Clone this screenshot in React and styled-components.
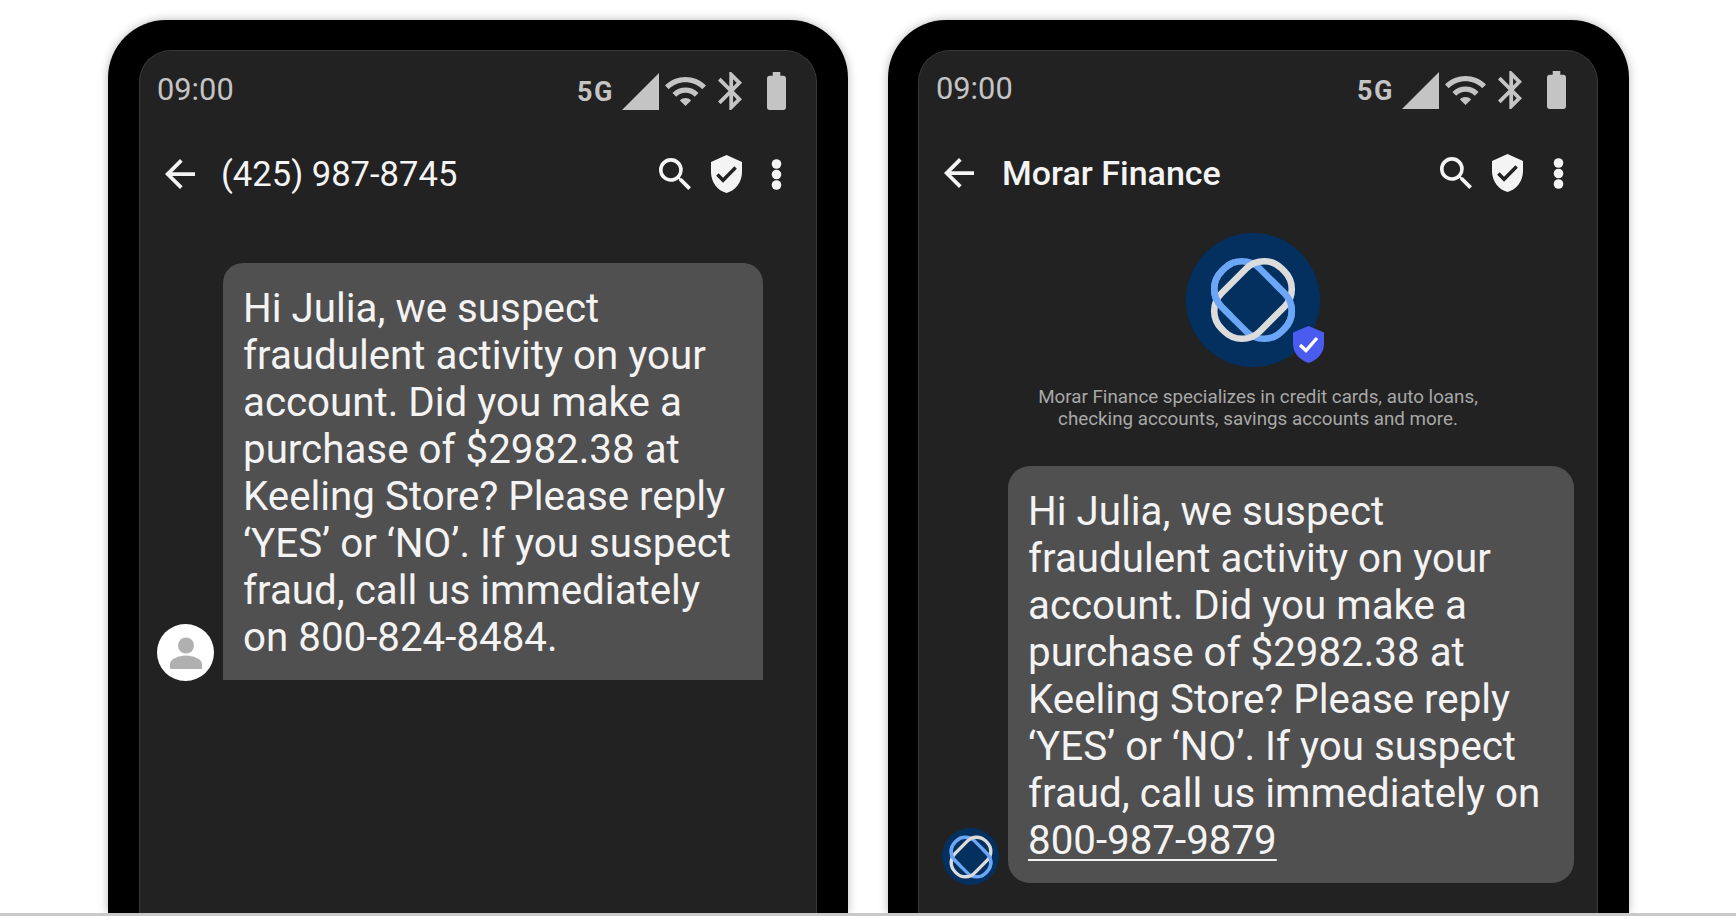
import React from "react";
import styled, { createGlobalStyle } from "styled-components";

const Global = createGlobalStyle`
  html, body { margin: 0; padding: 0; background: #fff; }
  body { font-family: Roboto, "Liberation Sans", sans-serif; }
`;

const Page = styled.div`
  box-sizing: border-box;
  height: 916px;
  overflow: hidden;
  display: flex;
  align-items: stretch;
  gap: 40px;
  padding: 20px 0 0 108px;
  background: #fff;
  border-bottom: 3px solid #c9c9c9;
`;

const Phone = styled.section`
  box-sizing: border-box;
  width: ${(p) => p.$w}px;
  padding: 30px 31px 0 ${(p) => p.$pl}px;
  display: flex;
  background: #000;
  border-radius: 58px 58px 0 0;
  box-shadow: 0 0 10px rgba(0, 0, 0, 0.28);
`;

const Screen = styled.div`
  box-sizing: border-box;
  flex: 1;
  min-width: 0;
  padding-top: ${(p) => p.$top}px;
  background: #222;
  border: 1px solid #383838;
  border-bottom: 0;
  border-radius: 32px 32px 0 0;
`;

const StatusBar = styled.div`
  height: 78px;
  display: flex;
  align-items: center;
  padding: 0 ${(p) => p.$pr}px 0 17px;
  color: #c4c4c4;
`;

const Clock = styled.span`
  font-size: 30.8px;
  margin: 0 auto 3px 0;
`;

const FiveG = styled.span`
  font-size: 27px;
  font-weight: 700;
  letter-spacing: 1.5px;
  line-height: 1;
  margin-top: 3px;
`;

const StatusGlyph = styled.svg`
  display: block;
  margin-left: ${(p) => p.$ml}px;
  fill: #c4c4c4;
`;

const AppBar = styled.header`
  height: 88px;
  display: flex;
  align-items: center;
  padding: 0 ${(p) => p.$pr}px 0 25px;
  color: #f4f4f4;
`;

const Title = styled.h1`
  margin: 0 auto 0 ${(p) => p.$ml}px;
  font-size: ${(p) => p.$size}px;
  font-weight: ${(p) => p.$weight};
  line-height: 1;
`;

const BarIcon = styled.svg`
  display: block;
  margin-left: ${(p) => p.$ml || 0}px;
  fill: #f4f4f4;
`;

const Profile = styled.div`
  display: flex;
  flex-direction: column;
  align-items: center;
  margin: 16px 0 36px;
`;

const LogoWrap = styled.div`
  position: relative;
  margin-right: 10px;
`;

const LogoDisc = styled.div`
  width: ${(p) => p.$size}px;
  height: ${(p) => p.$size}px;
  flex: none;
  display: flex;
  align-items: center;
  justify-content: center;
  border-radius: 50%;
  background: #04305f;
`;

const VerifiedBadge = styled.svg`
  position: absolute;
  right: -4px;
  bottom: 4px;
`;

const Bio = styled.p`
  margin: 20px 0 0;
  font-size: 18.8px;
  line-height: 21.5px;
  text-align: center;
  color: #a8a8a8;
`;

const MessageRow = styled.div`
  display: flex;
  align-items: flex-end;
  margin-top: ${(p) => p.$mt}px;
  padding-left: ${(p) => p.$pl}px;
  gap: ${(p) => p.$gap}px;
`;

const Bubble = styled.div`
  box-sizing: border-box;
  width: ${(p) => p.$w}px;
  padding: 21.5px 20px 19.5px;
  background: #505050;
  border-radius: ${(p) => (p.$round ? "22px" : "20px 20px 0 0")};
  color: #f3f3f3;
  font-size: 40.3px;
  line-height: 47px;
  white-space: nowrap;
`;

const PhoneLink = styled.span`
  text-decoration: underline;
  text-decoration-thickness: 2px;
  text-underline-offset: 5px;
`;

const PersonAvatar = styled.div`
  width: 57px;
  height: 57px;
  flex: none;
  margin-bottom: -1px;
  display: flex;
  align-items: center;
  justify-content: center;
  border-radius: 50%;
  background: #fff;
`;

const LogoSlot = styled.div`
  flex: none;
  margin-bottom: -2px;
`;

const RING = { x: 24.5, y: 40, width: 85, height: 54, rx: 25 };

const MorarMark = ({ size, id }) => (
  <svg width={size} height={size} viewBox="20 20 94 94" fill="none" strokeWidth="6.6">
    <defs>
      <clipPath id={id}>
        <rect x="20" y="20" width="27" height="94" />
        <rect x="87" y="20" width="27" height="94" />
      </clipPath>
    </defs>
    <rect {...RING} stroke="#6ba6f7" transform="rotate(45 67 67)" />
    <rect {...RING} stroke="#dcdcdc" transform="rotate(-45 67 67)" />
    <g clipPath={`url(#${id})`}>
      <rect {...RING} stroke="#6ba6f7" transform="rotate(45 67 67)" />
    </g>
  </svg>
);

const Status = ({ pr }) => (
  <StatusBar $pr={pr}>
    <Clock>09:00</Clock>
    <FiveG>5G</FiveG>
    <StatusGlyph $ml={8} width="37" height="37" viewBox="2 2 20 20">
      <path d="M2 22h20V2z" />
    </StatusGlyph>
    <StatusGlyph $ml={6} width="41" height="29" viewBox="1 4.4 22 15.6" preserveAspectRatio="none">
      <path d="M1 9l2 2c4.97-4.97 13.03-4.97 18 0l2-2C16.93 2.93 7.08 2.93 1 9zm8 8l3 3 3-3c-1.65-1.66-4.34-1.66-6 0zm-4-4l2 2c2.76-2.76 7.24-2.76 10 0l2-2C15.14 9.14 8.87 9.14 5 13z" />
    </StatusGlyph>
    <StatusGlyph $ml={12} width="24" height="38" viewBox="5 2 12.71 20" preserveAspectRatio="none">
      <path d="M17.71 7.71L12 2h-1v7.59L6.41 5 5 6.41 10.59 12 5 17.59 6.41 19 11 14.41V22h1l5.71-5.71-4.3-4.29 4.3-4.29zM13 5.83l1.88 1.88L13 9.59V5.83zm1.88 10.46L13 18.17v-3.76l1.88 1.88z" />
    </StatusGlyph>
    <StatusGlyph $ml={25} width="19" height="38" viewBox="7 2 10 20" preserveAspectRatio="none">
      <path d="M15.67 4H14V2h-4v2H8.33C7.6 4 7 4.6 7 5.33v15.33C7 21.4 7.6 22 8.33 22h7.33c.74 0 1.34-.6 1.34-1.33V5.33C17 4.6 16.4 4 15.67 4z" />
    </StatusGlyph>
  </StatusBar>
);

const Bar = ({ title, titleMl, titleSize, weight, pr, dotsGap }) => (
  <AppBar $pr={pr}>
    <BarIcon width="30" height="30" viewBox="4 4 16 16">
      <path d="M20 11H7.83l5.59-5.59L12 4l-8 8 8 8 1.41-1.41L7.83 13H20v-2z" />
    </BarIcon>
    <Title $ml={titleMl} $size={titleSize} $weight={weight}>{title}</Title>
    <BarIcon width="32" height="32" viewBox="3 3 17.49 17.49">
      <path d="M15.5 14h-.79l-.28-.27A6.471 6.471 0 0 0 16 9.5 6.5 6.5 0 1 0 9.5 16c1.61 0 3.09-.59 4.23-1.57l.27.28v.79l5 4.99L20.49 19l-4.99-5zm-6 0C7.01 14 5 11.99 5 9.5S7.01 5 9.5 5 14 7.01 14 9.5 11.99 14 9.5 14z" />
    </BarIcon>
    <BarIcon $ml={20} width="31" height="38" viewBox="3 1 18 22" preserveAspectRatio="none">
      <path d="M12 1L3 5v6c0 5.55 3.84 10.74 9 12 5.16-1.26 9-6.45 9-12V5l-9-4zm-2 16l-4-4 1.41-1.41L10 14.17l6.59-6.59L18 9l-8 8z" />
    </BarIcon>
    <BarIcon $ml={dotsGap} width="11" height="31" viewBox="0 0 11 31">
      <circle cx="5.5" cy="5" r="4.8" />
      <circle cx="5.5" cy="15.5" r="4.8" />
      <circle cx="5.5" cy="26" r="4.8" />
    </BarIcon>
  </AppBar>
);

const Lines = ({ lines }) =>
  lines.map((line, i) => (
    <React.Fragment key={i}>
      {line}
      {i < lines.length - 1 && <br />}
    </React.Fragment>
  ));

const commonLines = [
  "Hi Julia, we suspect",
  "fraudulent activity on your",
  "account. Did you make a",
  "purchase of $2982.38 at",
  "Keeling Store? Please reply",
  "‘YES’ or ‘NO’. If you suspect",
];

export default function App() {
  return (
    <>
      <Global />
      <Page>
        <Phone $w={740} $pl={31}>
          <Screen $top={1}>
            <Status pr={30} />
            <Bar title="(425) 987-8745" titleMl={26} titleSize={34.6} weight={400} pr={34} dotsGap={29} />
            <MessageRow $mt={45} $pl={17} $gap={9}>
              <PersonAvatar>
                <svg width="34" height="34" viewBox="0 0 34 34" fill="#b0b0b0">
                  <circle cx="17" cy="9.5" r="8" />
                  <path d="M1 33v-5c0-5 9-8.5 16-8.5S33 23 33 28v5z" />
                </svg>
              </PersonAvatar>
              <Bubble $w={540}>
                <Lines lines={[...commonLines, "fraud, call us immediately", "on 800-824-8484."]} />
              </Bubble>
            </MessageRow>
          </Screen>
        </Phone>
        <Phone $w={741} $pl={30}>
          <Screen $top={0}>
            <Status pr={31} />
            <Bar title="Morar Finance" titleMl={28} titleSize={34} weight={500} pr={33} dotsGap={30} />
            <Profile>
              <LogoWrap>
                <LogoDisc $size={134}>
                  <MorarMark size={94} id="mark-large" />
                </LogoDisc>
                <VerifiedBadge width="31" height="37" viewBox="0 0 31 37">
                  <path d="M15.5 0L31 6.5v11C31 27 24.5 34 15.5 37 6.5 34 0 27 0 17.5v-11z" fill="#4a5cf0" />
                  <path d="M7 19l6 5.5L24 12" fill="none" stroke="#fff" strokeWidth="3.4" />
                </VerifiedBadge>
              </LogoWrap>
              <Bio>
                Morar Finance specializes in credit cards, auto loans,
                <br />
                checking accounts, savings accounts and more.
              </Bio>
            </Profile>
            <MessageRow $mt={0} $pl={23} $gap={9}>
              <LogoSlot>
                <LogoDisc $size={57}>
                  <MorarMark size={48} id="mark-small" />
                </LogoDisc>
              </LogoSlot>
              <Bubble $w={566} $round>
                {commonLines.map((l) => (
                  <React.Fragment key={l}>
                    {l}
                    <br />
                  </React.Fragment>
                ))}
                fraud, call us immediately on
                <br />
                <PhoneLink>800-987-9879</PhoneLink>
              </Bubble>
            </MessageRow>
          </Screen>
        </Phone>
      </Page>
    </>
  );
}
